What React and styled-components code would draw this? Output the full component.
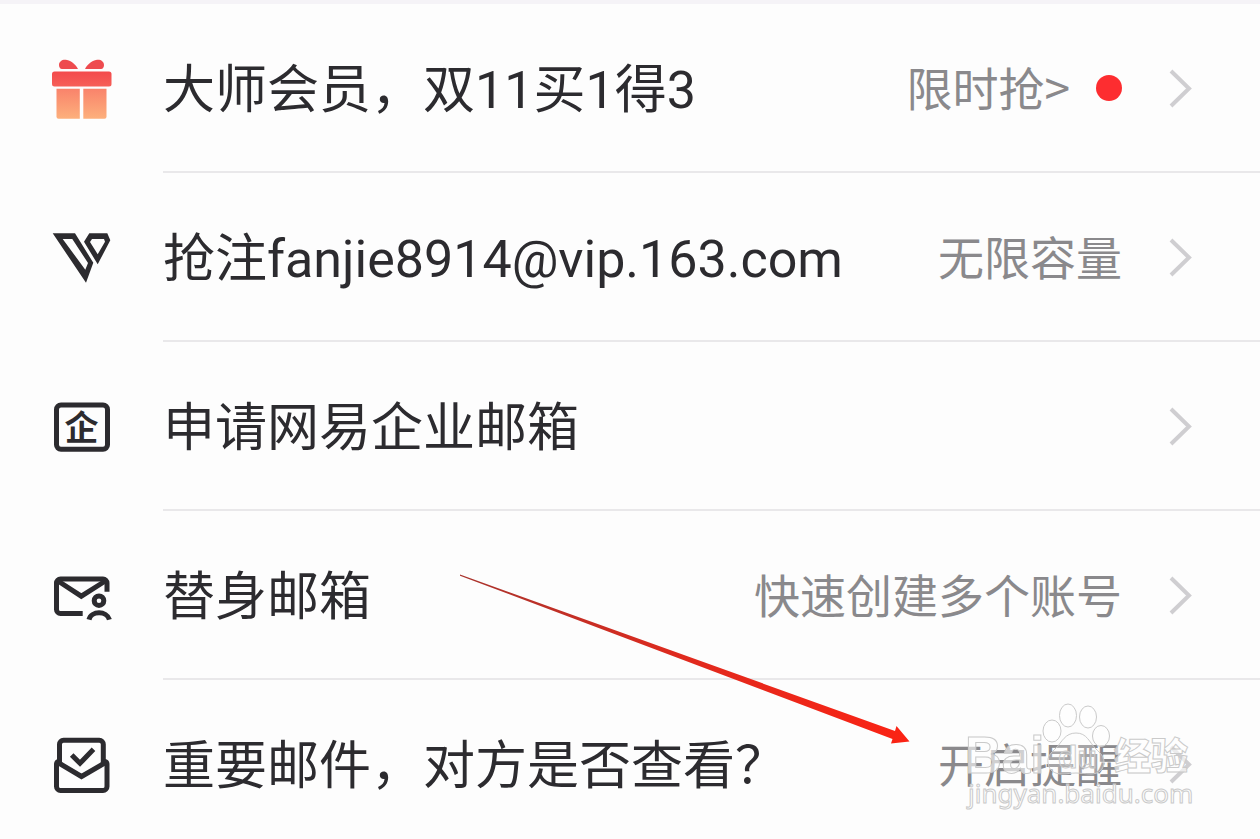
import React from "react";
import styled, { createGlobalStyle } from "styled-components";

const GlobalStyle = createGlobalStyle`
  * {
    box-sizing: border-box;
  }
  body {
    margin: 0;
    background-color: #fdfdfd;
    font-family: "Noto Sans CJK SC", sans-serif;
  }
`

const Page = styled.main`
  position: relative;
  overflow: hidden;
  border-top: 4px solid #f5f3f7;
`

const MenuList = styled.ul`
  margin: 0;
  padding: 0;
  list-style: none;
`

const MenuLink = styled.a`
  display: grid;
  grid-template-columns: 60px 1fr;
  column-gap: 51px;
  align-items: center;
  padding-left: 52px;
  color: #2c2b2f;
  text-decoration: none;
`

const RowIcon = styled.svg`
  display: block;
  width: 60px;
  height: 60px;
  fill: none;
  stroke: #2c2b2f;
  stroke-width: 5;
`

const RowBody = styled.div`
  display: flex;
  align-items: center;
  height: 169px;
  padding-right: 68px;
  border-bottom: 2px solid ${(props) => (props.$last ? "transparent" : "#e9e8ea")};
`

const RowTitle = styled.span`
  flex: 1;
  padding-top: 6px;
  font-family: Roboto, "Noto Sans CJK SC", sans-serif;
  font-size: 52px;
  line-height: 72px;
  white-space: nowrap;
`

const RowNote = styled.span`
  padding-bottom: 4px;
  font-size: 46px;
  line-height: 72px;
  white-space: nowrap;
  color: #8a898c;
`

const RedDot = styled.span`
  width: 26px;
  height: 26px;
  margin-left: 26px;
  border-radius: 50%;
  background-color: #fd2d30;
`

const Chevron = styled.svg`
  width: 24px;
  height: 40px;
  margin-left: 46px;
  fill: none;
  stroke: #cfced1;
  stroke-width: 4;
`

const Arrow = styled.svg`
  position: absolute;
  left: 460px;
  top: 570px;
  width: 450px;
  height: 170px;
  pointer-events: none;
`

const Watermark = styled.svg`
  position: absolute;
  right: 66px;
  top: 696px;
  width: 230px;
  height: 114px;
  pointer-events: none;
  fill: rgba(255, 255, 255, 0.6);
  stroke: #cacaca;
  stroke-width: 1;
`

const GiftIcon = () => (
  <RowIcon viewBox="0 0 60 60" aria-hidden="true">
    <defs>
      <linearGradient id="giftBox" x1="0" y1="0" x2="0" y2="1">
        <stop offset="0" stopColor="#f9836b" />
        <stop offset="1" stopColor="#fdb07c" />
      </linearGradient>
      <linearGradient id="giftLid" x1="0" y1="0" x2="0" y2="1">
        <stop offset="0" stopColor="#f34a4c" />
        <stop offset="1" stopColor="#f65f58" />
      </linearGradient>
    </defs>
    <g stroke="none">
      <path fill="#ee4b4f" d="M7 6C7 2 11 0 15 1c5 1 9 5 11 9H10C8 10 7 8 7 6z" />
      <path fill="#ee4b4f" d="M52 6c0-4-4-6-8-5-5 1-9 5-11 9h16c2 0 3-2 3-4z" />
      <rect x="0" y="12.5" width="59.5" height="15" rx="2.5" fill="url(#giftLid)" />
      <path fill="url(#giftBox)" d="M4.5 29.7h23.3v30H6.5a2 2 0 0 1-2-2z" />
      <path fill="url(#giftBox)" d="M31.3 29.7h23.2v28a2 2 0 0 1-2 2H31.3z" />
    </g>
  </RowIcon>
)

const VipIcon = () => (
  <RowIcon viewBox="0 0 60 60" aria-hidden="true">
    <g fill="#2c2b2f" fillRule="evenodd" stroke="none">
      <path d="M.7 5.3H23l18.3 29.4-7.3 20zM10.7 11l22.6 30.7L36 35 20.3 11z" />
      <path d="M37.3 5.3h18l3 7-12.6 24L32 13.7zM40 11l-2 3 7.7 12.3L53 13.7 52 11z" />
    </g>
  </RowIcon>
)

const CompanyIcon = () => (
  <RowIcon viewBox="0 0 60 60" aria-hidden="true">
    <rect x="4.5" y="8" width="51" height="44.3" rx="4.5" />
    <text x="29.5" y="43" textAnchor="middle" fontSize="34" fontWeight="700" fill="#2c2b2f" stroke="none">企</text>
  </RowIcon>
)

const AliasIcon = () => (
  <RowIcon viewBox="0 0 60 60" aria-hidden="true">
    <path d="M30.7 47.5H8.5a4 4 0 0 1-4-4V17a4 4 0 0 1 4-4H51a4 4 0 0 1 4 4v8.7" />
    <path d="M6 15l23.3 15.2L53.3 15" />
    <circle cx="47" cy="34.7" r="4.8" />
    <path d="M37 53.6c2-9 18-9 20.4 0" />
  </RowIcon>
)

const CheckMailIcon = () => (
  <RowIcon viewBox="0 0 60 60" aria-hidden="true">
    <path d="M7.5 28.5V9.3a4 4 0 0 1 4-4h35.8a4 4 0 0 1 4 4v19.2" />
    <path d="M7 26.5a3 3 0 0 0-2.5 3v22a4 4 0 0 0 4 4H51a4 4 0 0 0 4-4v-22a3 3 0 0 0-2.5-3" />
    <path d="M6 27.5l23.5 14 24-14" />
    <path d="M19.7 20l8.3 8.3 13.5-14" />
  </RowIcon>
)

const menuItems = [
  { id: "gift", icon: GiftIcon, title: "大师会员，双11买1得3", note: "限时抢>", dot: true },
  { id: "vip", icon: VipIcon, title: "抢注fanjie8914@vip.163.com", note: "无限容量" },
  { id: "company", icon: CompanyIcon, title: "申请网易企业邮箱" },
  { id: "alias", icon: AliasIcon, title: "替身邮箱", note: "快速创建多个账号" },
  { id: "receipt", icon: CheckMailIcon, title: "重要邮件，对方是否查看？", note: "开启提醒" },
]

const MenuRow = ({ item, last }) => {
  const Icon = item.icon
  return (
    <li>
      <MenuLink href={"#" + item.id}>
        <Icon />
        <RowBody $last={last}>
          <RowTitle>{item.title}</RowTitle>
          {item.note && <RowNote>{item.note}</RowNote>}
          {item.dot && <RedDot />}
          <Chevron viewBox="0 0 24 40" aria-hidden="true">
            <path d="M3 3l18 17.5L3 38" />
          </Chevron>
        </RowBody>
      </MenuLink>
    </li>
  )
}

const App = () => {
  return (
    <Page>
      <GlobalStyle />
      <MenuList>
        {menuItems.map((item, index) => (
          <MenuRow key={item.id} item={item} last={index === menuItems.length - 1} />
        ))}
      </MenuList>
      <Arrow viewBox="0 0 450 170" aria-hidden="true">
        <defs>
          <linearGradient id="arrowRed" x1="0" y1="0" x2="1" y2="0">
            <stop offset="0" stopColor="#a8332c" />
            <stop offset="0.5" stopColor="#e02a1e" />
            <stop offset="1" stopColor="#fb2314" />
          </linearGradient>
        </defs>
        <path fill="url(#arrowRed)" d="M0 .5L435 157l1.5-5 13 15.5-18.500 2 1.500-4.500L0 1.700z" />
      </Arrow>
      <Watermark viewBox="0 0 230 114" aria-hidden="true">
        <ellipse cx="104" cy="15.5" rx="8.5" ry="11.5" />
        <ellipse cx="124" cy="17" rx="8.5" ry="11" />
        <ellipse cx="88" cy="31" rx="9" ry="11" />
        <ellipse cx="137" cy="36" rx="8.5" ry="10.5" />
        <text x="1" y="73" fontFamily="Liberation Sans" fontSize="51" fontWeight="700">Bai</text>
        <path fillOpacity="0.4" d="M112 33c-11 0-14 9-20 15-5 5-9 8-8 15 1 8 7 11 14 11 6 0 9-1 14-1s9 1 15 1c7 0 13-4 13-12 0-6-4-9-8-13-7-7-9-16-20-16z" />
        <text x="94" y="68" fontFamily="Liberation Sans" fontSize="32" fontWeight="700" fillOpacity="0.3">du</text>
        <text x="150" y="70" fontSize="37" fontWeight="900">经验</text>
        <text x="4" y="103" fontFamily="Noto Sans" fontSize="26">jingyan.baidu.com</text>
      </Watermark>
    </Page>
  )
}

export default App
